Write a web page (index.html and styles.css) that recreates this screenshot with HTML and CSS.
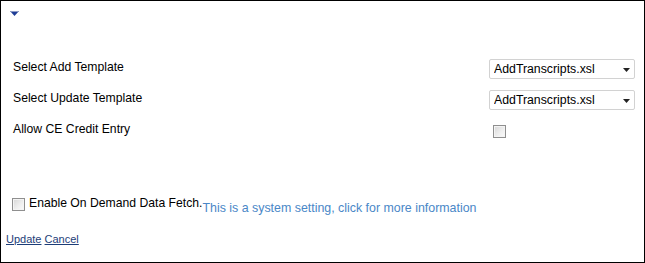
FILE: index.html
```html
<!DOCTYPE html>
<html>
<head>
<meta charset="utf-8">
<link rel="stylesheet" href="styles.css">
</head>
<body>
<div class="panel">
  <div class="toggle">
    <svg class="toggle-icon" width="9" height="5" viewBox="0 0 9 5"><polygon points="0,0 9,0 4.5,5" fill="#1f3d96"/><rect x="0" y="0" width="9" height="1" fill="#8c9ac4"/></svg>
  </div>
  <div class="settings">
    <div class="row">
      <span class="label">Select Add Template</span>
      <div class="control">
        <div class="select-wrap">
          <select class="select"><option>AddTranscripts.xsl</option></select>
          <svg class="arrow" width="7" height="4" viewBox="0 0 7 4"><polygon points="0,0 7,0 3.5,4" fill="#222"/></svg>
        </div>
      </div>
    </div>
    <div class="row">
      <span class="label">Select Update Template</span>
      <div class="control">
        <div class="select-wrap">
          <select class="select"><option>AddTranscripts.xsl</option></select>
          <svg class="arrow" width="7" height="4" viewBox="0 0 7 4"><polygon points="0,0 7,0 3.5,4" fill="#222"/></svg>
        </div>
      </div>
    </div>
    <div class="row">
      <span class="label">Allow CE Credit Entry</span>
      <div class="control">
        <input type="checkbox" class="check check-ce">
      </div>
    </div>
  </div>
  <div class="enable">
    <input type="checkbox" class="check check-enable">
    <span class="enable-label">Enable On Demand Data Fetch.</span>
    <a class="info">This is a system setting, click for more information</a>
  </div>
  <div class="actions">
    <a class="link" href="#">Update</a> <a class="link" href="#">Cancel</a>
  </div>
</div>
</body>
</html>
```

FILE: styles.css
```css
html, body {
  margin: 0;
  padding: 0;
  background: #fff;
}

body {
  font-family: "Liberation Sans", Arial, sans-serif;
  font-size: 12.2px;
  color: #000;
}

.panel {
  box-sizing: border-box;
  width: 645px;
  height: 263px;
  border: 1px solid #000;
  background: #fff;
}

.toggle {
  padding: 10px 0 0 9px;
  height: 5px;
}

.toggle-icon {
  display: block;
}

.settings {
  margin-top: 37px;
  padding: 0 9px 0 12px;
}

.row {
  display: flex;
  align-items: center;
  justify-content: space-between;
  height: 31px;
}

.label {
  padding-bottom: 4px;
  line-height: 14px;
}

.control {
  width: 146px;
  display: flex;
  align-items: center;
}

.select-wrap {
  position: relative;
  width: 146px;
  height: 20px;
}

.select {
  appearance: none;
  -webkit-appearance: none;
  box-sizing: border-box;
  width: 146px;
  height: 20px;
  margin: 0;
  padding: 0 16px 0 4px;
  border: 1px solid #d2d2d2;
  border-radius: 2px;
  background: #fff;
  font-family: "Liberation Sans", Arial, sans-serif;
  font-size: 12.3px;
  color: #000;
  outline: none;
}

.arrow {
  position: absolute;
  right: 5px;
  top: 9px;
  display: block;
  pointer-events: none;
}

.check {
  appearance: none;
  -webkit-appearance: none;
  box-sizing: border-box;
  width: 13px;
  height: 13px;
  margin: 0;
  border: 1px solid #8f8f8f;
  background: linear-gradient(135deg, #d6d6d6 0%, #eeeeee 55%, #fbfbfb 100%);
  box-shadow: inset 0 0 0 1px #f4f4f4;
}

.check-ce {
  margin-left: 4px;
  margin-top: 2px;
}

.enable {
  display: flex;
  align-items: center;
  margin-top: 45px;
  padding-left: 11px;
}

.check-enable {
  margin-top: 2px;
  margin-right: 4px;
}

.enable-label {
  line-height: 14px;
}

.info {
  margin-top: 10px;
  line-height: 14px;
  color: #4a87c7;
  font-size: 12.4px;
  cursor: pointer;
}

.actions {
  margin-top: 18px;
  padding-left: 5px;
  font-size: 11px;
  line-height: 13px;
}

.link {
  color: #1c3d78;
  text-decoration: underline;
}
```
